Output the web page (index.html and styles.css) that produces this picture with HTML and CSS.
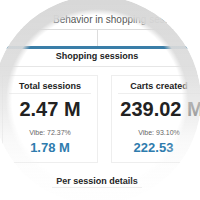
FILE: index.html
```html
<!DOCTYPE html>
<html>
<head>
<meta charset="utf-8">
<link rel="stylesheet" href="styles.css">
</head>
<body>
<main class="dash">
  <div class="title">Behavior in shopping sessions</div>
  <div class="tabs"><div class="tab tab-first"></div><div class="tab"></div></div>
  <div class="section">Shopping sessions</div>
  <div class="cards">
    <div class="card">
      <div class="card-head">Total sessions</div>
      <div class="big">2.47 M</div>
      <div class="vibe">Vibe: 72.37%</div>
      <div class="blue">1.78 M</div>
    </div>
    <div class="card">
      <div class="card-head">Carts created</div>
      <div class="big big-shift">239.02 M</div>
      <div class="vibe">Vibe: 93.10%</div>
      <div class="blue blue-shift">222.53</div>
    </div>
  </div>
  <div class="footer"><span class="footer-text">Per session details</span></div>
</main>
<div class="ring"></div>
</body>
</html>
```
FILE: styles.css
```css
html, body {
  margin: 0;
  padding: 0;
}
body {
  width: 200px;
  height: 200px;
  overflow: hidden;
  background: #ffffff;
  position: relative;
  font-family: "Liberation Sans", Arial, sans-serif;
  color: #222222;
}
.ring {
  position: absolute;
  left: -7px;
  top: -4px;
  width: 208px;
  height: 208px;
  border-radius: 50%;
  background: linear-gradient(to bottom,
    rgba(214, 214, 214, 0.97) 0%,
    rgba(221, 221, 221, 0.92) 35%,
    rgba(229, 229, 229, 0.7) 55%,
    rgba(236, 236, 236, 0.35) 68%,
    rgba(242, 242, 242, 0.15) 82%,
    rgba(245, 245, 245, 0.08) 95%);
  -webkit-mask-image: radial-gradient(circle closest-side, transparent 85px, #000 91px);
  mask-image: radial-gradient(circle closest-side, transparent 85px, #000 91px);
}
.dash {
  height: 200px;
  background: #ffffff;
  clip-path: circle(104px at 97px 100px);
  display: flex;
  flex-direction: column;
}
.title {
  padding: 14px 0 3px 53px;
  font-size: 10px;
  line-height: 12px;
  color: #555555;
  white-space: nowrap;
  border-bottom: 1px solid #dddddd;
}
.tabs {
  display: flex;
  height: 16px;
}
.tab {
  flex: 1;
}
.tab-first {
  flex: 0 0 97px;
  border-right: 1px solid #dddddd;
}
.section {
  border-top: 3px solid #3a7ea8;
  padding: 2px 0 4px;
  font-size: 9px;
  line-height: 11px;
  font-weight: bold;
  text-align: center;
  width: 194px;
  border-bottom: 1px solid #e6e6e6;
}
.cards {
  display: flex;
  gap: 13px;
  margin-top: 8px;
  padding-left: 2px;
}
.card {
  flex: 0 0 94px;
  border: 1px solid #eeeeee;
  display: flex;
  flex-direction: column;
  align-items: center;
  padding-bottom: 7px;
}
.card-head {
  align-self: stretch;
  margin: 5px 6px 0;
  padding-bottom: 1px;
  font-size: 9px;
  line-height: 11px;
  font-weight: bold;
  text-align: center;
  border-bottom: 1px solid #eeeeee;
  white-space: nowrap;
}
.big {
  margin-top: 4px;
  font-size: 20px;
  line-height: 22px;
  font-weight: bold;
  white-space: nowrap;
}
.big-shift {
  margin-left: 6px;
}
.vibe {
  margin-top: 8px;
  font-size: 7px;
  line-height: 9px;
  color: #666666;
}
.blue {
  margin-top: 3px;
  font-size: 13px;
  line-height: 15px;
  font-weight: bold;
  color: #2f7cae;
}
.blue-shift {
  margin-right: 11px;
}
.footer {
  margin-top: 7px;
  width: 194px;
  text-align: center;
}
.footer-text {
  display: inline-block;
  font-size: 9px;
  line-height: 11px;
  font-weight: bold;
  padding: 0 4px;
  border-bottom: 1px solid #eeeeee;
}
```
